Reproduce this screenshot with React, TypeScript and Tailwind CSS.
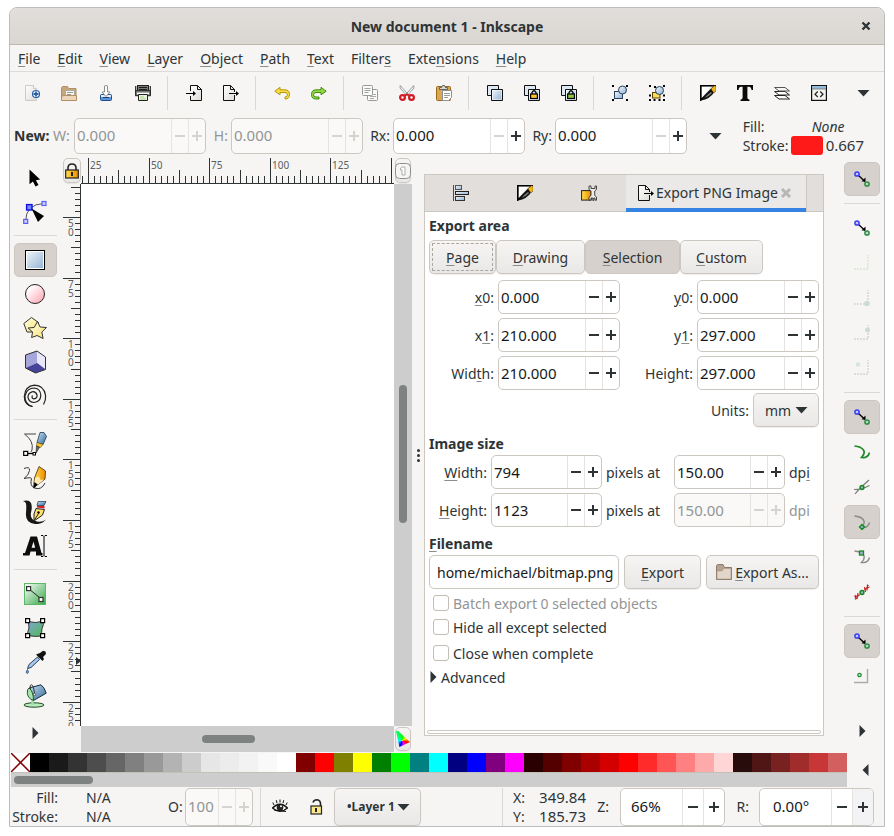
import React from 'react';

type Kids = { children?: React.ReactNode };

/* Text with a mnemonic: the letter after "_" is underlined. */
function Mn({ text }: { text: string }) {
  const i = text.indexOf('_');
  if (i < 0) return <>{text}</>;
  return (
    <>
      {text.slice(0, i)}
      <span className="underline decoration-[#8b8e8f] decoration-1 underline-offset-2">{text[i + 1]}</span>
      {text.slice(i + 2)}
    </>
  );
}

function Svg({ size = 16, children }: Kids & { size?: number }) {
  return (
    <svg width={size} height={size} viewBox={`0 0 ${size} ${size}`} className="shrink-0" aria-hidden="true">
      {children}
    </svg>
  );
}

function Gradients() {
  return (
    <svg width="0" height="0" className="absolute" aria-hidden="true">
      <defs>
        <linearGradient id="blue" x1="0" y1="0" x2="1" y2="1"><stop offset="0" stopColor="#f4f8fb" /><stop offset="1" stopColor="#8fb0d2" /></linearGradient>
        <linearGradient id="pink" x1="0" y1="0" x2="1" y2="1"><stop offset="0.2" stopColor="#fff" /><stop offset="1" stopColor="#ff9fae" /></linearGradient>
        <linearGradient id="yel" x1="0" y1="0" x2="1" y2="1"><stop offset="0" stopColor="#fffef0" /><stop offset="1" stopColor="#fbe36a" /></linearGradient>
        <linearGradient id="gold" x1="0" y1="0" x2="1" y2="0"><stop offset="0" stopColor="#ffe14d" /><stop offset="1" stopColor="#f08a00" /></linearGradient>
        <linearGradient id="green" x1="0" y1="0" x2="1" y2="1"><stop offset="0" stopColor="#fff" /><stop offset="1" stopColor="#35a845" /></linearGradient>
        <linearGradient id="mesh" x1="0" y1="0" x2="1" y2="1"><stop offset="0" stopColor="#7fa5dd" /><stop offset="1" stopColor="#4fb94f" /></linearGradient>
        <linearGradient id="steel" x1="0" y1="0" x2="1" y2="1"><stop offset="0" stopColor="#c8e2f4" /><stop offset="1" stopColor="#2f6695" /></linearGradient>
        <linearGradient id="paper" x1="0" y1="0" x2="1" y2="1"><stop offset="0" stopColor="#fff" /><stop offset="1" stopColor="#dcdcd6" /></linearGradient>
      </defs>
    </svg>
  );
}

/* ---- command bar icons ---- */
const NewDoc = () => (
  <Svg>
    <path d="M1.500.5h8l3 3v12h-11z" fill="url(#paper)" stroke="#c9cbc8" />
    <path d="M9.500.5v3h3" fill="#fff" stroke="#c9cbc8" />
    <circle cx="12" cy="9" r="3.500" fill="#fff" stroke="#2a62a8" strokeWidth="1.200" />
    <path d="M12 6.500v5M9.500 9h5" stroke="#2a62a8" strokeWidth="1.800" />
  </Svg>
);
const OpenDoc = () => (
  <Svg>
    <path d="M.5 14.500v-12l1-1h5l1 2h7.500v11z" fill="#c6a67c" stroke="#b28f63" />
    <rect x="4.500" y="5.500" width="9" height="5" fill="#f7f7f5" stroke="#a9a9a0" />
    <path d="M6 7.500h6M6 9.500h4" stroke="#9a9a92" />
    <path d="M.5 15.500V11l4-.5h11v5z" fill="#ecd5b8" stroke="#b28f63" />
  </Svg>
);
const SaveDoc = () => (
  <Svg>
    <rect x="2.500" y="9.500" width="11" height="6" rx="1" fill="#5b94d6" stroke="#234e8c" />
    <path d="M3 10h10v2H3z" fill="#e4eef9" />
    <path d="M5 12.500h6" stroke="#1d3e70" />
    <path d="M6.500 1q1.500-1 3 0v6h2.500L8 11.500 4 7h2.500z" fill="#fff" stroke="#8d8f8c" />
  </Svg>
);
const PrintDoc = () => (
  <Svg>
    <rect x="2.500" y=".5" width="11" height="6" fill="#777b78" stroke="#222" />
    <path d="M4 2.500h8M4 4.500h8" stroke="#1d1d1d" strokeWidth="1.200" />
    <path d="M.7 1v8.500h14.600V1" fill="none" stroke="#2d3234" strokeWidth="1.300" />
    <rect x=".7" y="5.700" width="14.600" height="5" fill="#8a8e8b" stroke="#222" />
    <path d="M2 8.500h12" stroke="#fff" strokeWidth="1.500" />
    <path d="M3.500 9.500h9v6h-9z" fill="#e9f3df" stroke="#222" />
    <path d="M5 12h4M5 14h6" stroke="#a8cf80" strokeWidth="1.200" />
  </Svg>
);
const ImportIcon = () => (
  <Svg>
    <path d="M4.500 6V.5h7l4 4v11h-11V11" fill="url(#paper)" stroke="#111" />
    <path d="M11.500.5v4h4" fill="none" stroke="#111" />
    <path d="M0 8.500h9" stroke="#000" /><path d="M7 6l3 2.500L7 11z" />
  </Svg>
);
const ExportIcon = () => (
  <Svg>
    <path d="M11.500 7V4.500l-4-4h-7v15h11V10" fill="url(#paper)" stroke="#111" />
    <path d="M7.500.5v4h4" fill="none" stroke="#111" />
    <path d="M6 8.500h9" stroke="#000" /><path d="M13 6l3 2.500-3 2.500z" />
  </Svg>
);
const UndoIcon = () => (
  <Svg>
    <path d="M6 2.300L.8 6.200 6 9.800V7.500h5q2.500 0 2.500 2.200T11 12v2q4.500 0 4.500-4.500T11 4.800H6z" fill="#f3dd4b" stroke="#bb9600" strokeLinejoin="round" />
  </Svg>
);
const RedoIcon = () => (
  <Svg>
    <path d="M10 2.300l5.200 3.900L10 9.800V7.500H5Q2.500 7.500 2.500 9.700T5 12h3v2H5Q.5 14 .5 9.500T5 4.800h5z" fill="#93d94e" stroke="#3f8f06" strokeLinejoin="round" />
  </Svg>
);
const CopyIcon = () => (
  <Svg>
    <rect x="5.500" y="4.500" width="10" height="11" rx="1" fill="#fafafa" stroke="#979993" />
    <path d="M11 9.500h3M8 11.500h6M8 13.500h4" stroke="#a9aba6" />
    <rect x=".5" y=".5" width="10" height="10" rx="1" fill="#fafafa" stroke="#979993" />
    <path d="M2.500 3.500h6M2.500 5.500h6M2.500 7.500h4" stroke="#a0a29d" />
  </Svg>
);
const CutIcon = () => (
  <Svg>
    <path d="M1.300.5l8 9-1.600 1L1 3zM14.700.5l-8 9 1.600 1L15 3z" fill="#f3f3f1" stroke="#85878a" strokeWidth=".8" />
    <circle cx="3.500" cy="12.500" r="2.400" fill="none" stroke="#d11a24" strokeWidth="2.200" />
    <circle cx="12.500" cy="12.500" r="2.400" fill="none" stroke="#d11a24" strokeWidth="2.200" />
    <path d="M5 10.500l3-1 3 1" stroke="#d11a24" strokeWidth="1.800" fill="none" />
  </Svg>
);
const PasteIcon = () => (
  <Svg>
    <rect x=".5" y="1.500" width="14" height="14" rx="1" fill="#dba552" stroke="#9a6a1c" />
    <path d="M3.500 4.500v-2h2l1-2h2l1 2h2v2z" fill="#d5d7d3" stroke="#60635f" />
    <path d="M6.500 5.500h9v7l-3 3h-6z" fill="#fff" stroke="#8f918d" />
    <path d="M8 8.500h6M8 10.500h6M8 12.500h4" stroke="#9a9c98" />
  </Svg>
);
const Squares = () => (
  <>
    <path d="M.5.5h11v10H.5z" fill="#dce8f4" stroke="#111" />
    <path d="M4.500 4.500h11v11h-11z" fill="url(#blue)" stroke="#111" />
    <path d="M5.500 5.500h9v9h-9z" fill="none" stroke="#fff" strokeOpacity=".5" />
  </>
);
const DuplicateIcon = () => <Svg><Squares /></Svg>;
const CloneIcon = ({ fill }: { fill: string }) => (
  <Svg>
    <Squares />
    <path d="M8 9V7.500Q10 4 12 7.500V9" fill="none" stroke="#000" strokeWidth="1.300" />
    <rect x="6.600" y="9" width="6.800" height="4.500" fill={fill} stroke="#000" strokeWidth="1.200" />
  </Svg>
);
const Corners = () => <path d="M0 0h2v2H0zM14 0h2v2h-2zM0 14h2v2H0zM4.500 14h2v2h-2zM14 14h2v2h-2zM14 9.500h2v2h-2zM9.500 14h2v2h-2zM0 9.500h2v2H0zM5 1h2v2H5z" />;
const GroupIcon = () => (
  <Svg>
    <path d="M0 0h2v2H0zM14 0h2v2h-2zM0 14h2v2H0zM14 14h2v2h-2z" />
    <rect x="2.500" y="6.500" width="8" height="7" fill="url(#blue)" stroke="#27405c" />
    <circle cx="10.500" cy="5" r="4" fill="url(#blue)" stroke="#27405c" />
  </Svg>
);
const UngroupIcon = () => (
  <Svg>
    <Corners />
    <rect x="3.500" y="7.500" width="7.500" height="5.500" fill="#ffd95a" stroke="#5a4300" />
    <circle cx="10.500" cy="5.500" r="4" fill="url(#blue)" stroke="#27405c" />
  </Svg>
);
const FillStrokeIcon = () => (
  <Svg>
    <path d="M.8.8h14.400L13 3 .8 15z" fill="#d9d9d6" stroke="#000" strokeWidth="1.600" />
    <path d="M2 2h9L2 12z" fill="#fff" />
    <path d="M1 15.500Q5 10 11 4l3 3.500Q10 14 1 15.500z" fill="#111" />
    <path d="M4.500 13q3.500-4 6.500-6l1 1q-3 3.500-7.500 5z" fill="#7c7c7a" />
    <path d="M11 3.800L14.500.8l1.500.5V6l-2 1.800z" fill="#f4b71b" stroke="#6d4c00" strokeWidth=".6" />
  </Svg>
);
const TextDialogIcon = () => (
  <Svg>
    <path d="M0 0h16v5h-1.500Q14 1.800 12 1.800h-1.600v11q0 1.700 2.100 1.900v1.300H3.500v-1.300q2.100-.2 2.100-1.900v-11H4Q2 1.800 1.500 5H0z" fill="#0a0a0a" />
  </Svg>
);
const LayersIcon = () => (
  <Svg>
    <path d="M.5 10.500h10.500l4.500 3.500H5z" fill="#fff" stroke="#222" strokeLinejoin="round" />
    <path d="M.5 6.500h10.500l4.500 3.500H5z" fill="#fff" stroke="#222" strokeLinejoin="round" />
    <path d="M.5 2.500h10.500l4.500 3.500H5z" fill="#f5f5f3" stroke="#555" strokeLinejoin="round" />
  </Svg>
);
const XmlIcon = () => (
  <Svg>
    <rect x=".6" y=".6" width="14.800" height="14.800" fill="#f2f2ee" stroke="#111" strokeWidth="1.200" />
    <path d="M1.200 1.200h13.600v2.600H1.200z" fill="#8cb9dd" />
    <path d="M1 4h14" stroke="#444" strokeWidth=".6" />
    <path d="M6.800 6.500L4 9.200 6.800 12M9.200 6.500L12 9.200 9.200 12" fill="none" stroke="#222" strokeWidth="1.200" />
  </Svg>
);
const AlignIcon = () => (
  <Svg>
    <path d="M.5 0v16" stroke="#c8141e" />
    <rect x="2.500" y=".5" width="6" height="4" fill="url(#blue)" stroke="#555" />
    <rect x="2.500" y="6.500" width="13" height="3" fill="url(#blue)" stroke="#222" />
    <rect x="2.500" y="11.500" width="9" height="4" fill="url(#blue)" stroke="#333" />
  </Svg>
);
const ObjPropIcon = () => (
  <Svg>
    <rect x=".6" y="5.600" width="9.500" height="9.500" fill="url(#gold)" stroke="#222" strokeWidth="1" />
    <path d="M8 1v3.500L10 6v4.500L8 12v3h2v-2h1.800v2.500h1V13h1.200v2.200h1.500V12L13.700 10.500V6L15.500 4.500V1H14v2.500h-4V1z" fill="#ecece8" stroke="#333" strokeWidth=".9" />
  </Svg>
);
const FolderIcon = () => (
  <Svg>
    <path d="M.5 15.500V1.500l1-1h5.500l1.500 3h7v12z" fill="#b5a291" stroke="#8d7a68" />
    <path d="M1 15V7h5l2-2.500h7V15z" fill="#e2d6ca" stroke="#a8967f" strokeWidth=".6" />
  </Svg>
);

/* ---- toolbox icons ---- */
const SelectTool = () => <Svg size={24}><path d="M6.500 3.500v14.800l3.400-2.800 2.600 5 3-1.500-2.600-4.800 4.200-.7z" fill="#000" /></Svg>;
const NodeTool = () => (
  <Svg size={24}>
    <path d="M2.500 22Q2.500 4 21 3.500" fill="none" stroke="#555" />
    <rect x="3.600" y="4.600" width="5.400" height="5.400" fill="#7d86ff" stroke="#0c12e0" strokeWidth="1.400" />
    <rect x="19" y="1.500" width="4" height="4" fill="#ccccff" stroke="#5a5ff5" strokeWidth="1.200" />
    <rect x=".7" y="19.400" width="4" height="4" fill="#ccccff" stroke="#5a5ff5" strokeWidth="1.200" />
    <path d="M8.500 8.500L21 16l-6 6z" fill="#000" />
  </Svg>
);
const RectTool = () => (
  <Svg size={24}>
    <rect x="2.500" y="2.500" width="19" height="19" fill="url(#blue)" stroke="#000" />
    <rect x="3.500" y="3.500" width="17" height="17" fill="none" stroke="#fff" />
  </Svg>
);
const EllipseTool = () => <Svg size={24}><circle cx="12" cy="12" r="9.500" fill="url(#pink)" stroke="#222" /></Svg>;
const StarTool = () => (
  <Svg size={24}>
    <path d="M8.500 1.500l7 5-2.500 9.500H4L.8 7.500z" fill="url(#yel)" stroke="#333" />
    <path d="M14.500 5.500l2.600 5.500 6.400.5-4.700 4.500 1.300 6.500-6-3-5.500 2 1-5.500-4.500-4 6-.5z" fill="url(#yel)" stroke="#333" />
  </Svg>
);
const BoxTool = () => (
  <Svg size={24}>
    <path d="M2.500 5l11.500-4 8.500 6v12.500L12.500 23l-10-5z" fill="#8583c2" />
    <path d="M14 1l8.500 6v12.500L14 13z" fill="#e9e8fb" />
    <path d="M14 13l8.500 6.500L12.500 23l-10-5z" fill="#45439a" />
    <path d="M2.500 5L14 1v12L2.500 18z" fill="#a7a6da" />
    <path d="M2.500 5l11.500-4 8.500 6v12.500L12.500 23l-10-5z" fill="none" stroke="#333" />
  </Svg>
);
const SpiralTool = () => (
  <Svg size={24}>
    <path d="M9.500 11.500Q8 14.500 11 14.800 14.500 14.500 14 11 12.800 7.200 9 7.800 4.800 9 5 13.500 6.200 18.500 11 18.500 17.500 17.800 17.800 11.500 17.500 4.800 11.500 4 4 4 2 11.500 1.200 20.500 9.500 22.500" fill="none" stroke="#222" strokeWidth="1.200" />
    <path d="M9.500 22.500Q1.500 21 1.300 12.500 2 2 11.500 1.200 21 1.500 22.600 11.500q.4 5-2.100 9" fill="none" stroke="#222" strokeWidth="1.200" />
  </Svg>
);
const PenTool = () => (
  <Svg size={24}>
    <path d="M13 2H1.500Q11 9 9 18l-1 2" fill="none" stroke="#444" />
    <path d="M5 21.500h7" stroke="#000" strokeWidth="1.300" />
    <rect x=".7" y="19.400" width="4" height="4" fill="#fff" stroke="#000" strokeWidth="1.200" />
    <rect x="10" y="20.500" width="2.500" height="2.500" fill="#fff" stroke="#000" />
    <path d="M17 .5h4l2.500 4-3.500 8-6-2z" fill="url(#steel)" stroke="#1b3b58" strokeWidth=".8" />
    <path d="M14 10.500l6 2-2.500 3-4-1.500z" fill="#fbc630" stroke="#6b4d00" strokeWidth=".6" />
    <path d="M13.500 14l3 1.200-3.500 6z" fill="#666" stroke="#222" strokeWidth=".6" />
  </Svg>
);
const PencilTool = () => (
  <Svg size={24}>
    <path d="M1 2.500Q7 0 6.500 4.500 6 9 1 12.500q7-1.500 7.500 0-2 7.500 3 9.500 7 2.500 10.500-5" fill="none" stroke="#333" />
    <path d="M16 .5L22.500 5 22 13l-5 4-6.500 4.500L11.500 12z" fill="url(#gold)" stroke="#3d2b00" strokeWidth=".8" />
    <path d="M12 12l4-1.500 1.500 3.500 3.500-.5-4 3.500-6 4.500z" fill="#ffe9b8" />
    <path d="M11.300 16l3.500 2.500-4 4z" fill="#000" />
  </Svg>
);
const CalligraphyTool = () => (
  <Svg size={24}>
    <path d="M0 1q6-1.500 8 2 1.500 4 0 9.500-1.500 7 6 9 5 1 9-2-4 5-11 4.500Q2 23 3 13q.5-7 0-9.500Q2.500 1.500 0 1z" fill="#161616" />
    <path d="M15 1.500h8l-2 4h-7z" fill="url(#steel)" stroke="#16324c" strokeWidth=".7" />
    <path d="M14 6h7.500v2.500L14 7.500z" fill="#d81e2a" />
    <path d="M13 8.500l8.500 1-2 5.500-8.500 6V14z" fill="#ffe071" stroke="#222" />
    <path d="M11.500 20l4-6.500" stroke="#222" /><circle cx="15.500" cy="12.500" r="1.200" />
  </Svg>
);
const TextTool = () => (
  <Svg size={24}>
    <path d="M0 21.500v-2.500h2L7.500 2.500h6.500L18.500 19h1v2.500h-6.500v-4H7.500l-1 4z" fill="#0c0c0c" />
    <path d="M10.500 7.500l1.700 6.300H8.600z" fill="#f6f5f4" />
    <path d="M18 1.500h2l1 1 1-1h2M18 22.500h2l1-1 1 1h2M21 2.500v19" fill="none" stroke="#000" />
  </Svg>
);
const GradientTool = () => (
  <Svg size={24}>
    <rect x="1.500" y="1.500" width="21" height="21" fill="url(#green)" stroke="#5cb866" />
    <path d="M6 7l13 10.500" stroke="#222" />
    <rect x="3.600" y="4.600" width="4" height="4" fill="#fff" stroke="#333" strokeWidth="1.200" />
    <rect x="16" y="15.500" width="4" height="4" fill="#fff" stroke="#333" strokeWidth="1.200" />
  </Svg>
);
const MeshTool = () => (
  <Svg size={24}>
    <path d="M4.500 4.500q8 4 15 0 2 4-.5 8-1 4 .5 7.500-8 1-15-.5 0-4 1.500-7.500Q6 8 4.500 4.500z" fill="url(#mesh)" stroke="#333" />
    <path d="M2.600 2.600h4v4h-4zM17.600 2.600h4v4h-4zM2.600 17.600h4v4h-4zM17.600 17.600h4v4h-4z" fill="#fff" stroke="#000" strokeWidth="1.200" />
  </Svg>
);
const DropperTool = () => (
  <Svg size={24}>
    <path d="M14.500 7L6 14.500l-1.500 4L8 17.500 16.500 9.500z" fill="#a9c9ea" stroke="#243e5b" />
    <path d="M13 4.500l6.500 6.500 1.500-2-1-2 3-3-.5-2.500L20 .8 17 3z" fill="#111" />
    <path d="M4.500 19.500q2 3 0 4-2.500-.5 0-4z" fill="#76a7dd" stroke="#2a4d78" strokeWidth=".8" />
  </Svg>
);
const BucketTool = () => (
  <Svg size={24}>
    <ellipse cx="11" cy="21" rx="10" ry="2.200" fill="#b9ecbd" stroke="#1e4d24" />
    <path d="M9.500 15v6" stroke="#9fe0a6" strokeWidth="2.400" />
    <path d="M6 4L18 .8q3.500 2.500 5.200 8.400L10.500 16.500z" fill="url(#steel)" stroke="#1a2c3b" strokeLinejoin="round" />
    <path d="M6 4q4.500 3.500 4.500 12.500Q5 14.500 4.300 9.500 4 5 6 4z" fill="#a8e3ae" stroke="#1f5c2a" />
    <path d="M7.500 5Q6.500.8 8.500.8t3 9" fill="none" stroke="#333" />
    <circle cx="11.500" cy="10.500" r="1.200" fill="#fff" stroke="#333" strokeWidth=".8" />
  </Svg>
);

/* ---- snap bar icons ---- */
const Snap = () => (
  <Svg>
    <path d="M4 4l7 6.500" stroke="#000" strokeWidth="1.300" /><path d="M7.500 10.500h4v-4z" />
    <circle cx="3" cy="3" r="2.100" fill="#c5c8ff" stroke="#3a3df0" strokeWidth="1.500" />
    <circle cx="13" cy="13" r="2.100" fill="#b5dcc4" stroke="#2f8a42" strokeWidth="1.500" />
  </Svg>
);
const Edge = ({ kind }: { kind: number }) => (
  <Svg>
    <path d="M0 14h14V0" fill="none" stroke={kind ? '#d3d5d4' : '#d4e8d4'} strokeWidth="1.400" strokeDasharray="2 1" />
    {kind === 1 && <circle cx="13" cy="13.500" r="2.800" fill="#c9ddd3" />}
    {kind === 2 && <circle cx="13.500" cy="5" r="2.500" fill="#c9ddd3" />}
    {kind === 3 && <circle cx="4" cy="4.500" r="1.600" fill="#e2eee8" stroke="#c9ddd3" />}
  </Svg>
);
const curve = 'M.5 2Q7 2.500 9.500 6 11.500 9.500 7.500 13.500 14 14.500 15.500 8.500';
const PathSnap = () => <Svg><path d={curve} fill="none" stroke="#1f8a28" strokeWidth="1.700" /></Svg>;
const CrossSnap = () => (
  <Svg>
    <path d="M1 15Q5 10 15 1M0 10.500q8 0 15.500-4" fill="none" stroke="#7c7c7c" strokeWidth="1.200" />
    <circle cx="8" cy="8.500" r="1.900" fill="#9cb0d0" stroke="#168a20" strokeWidth="1.500" />
  </Svg>
);
const CuspSnap = () => (
  <Svg>
    <path d={curve} fill="none" stroke="#8a8a8a" strokeWidth="1.400" />
    <path d="M8 10.500l2.500 2.500L8 15.500 5.500 13z" fill="#9cb0d0" stroke="#168a20" strokeWidth="1.400" />
  </Svg>
);
const SmoothSnap = () => (
  <Svg>
    <path d={curve} fill="none" stroke="#8a8a8a" strokeWidth="1.400" />
    <rect x="5.500" y="2" width="4" height="4" fill="#9cb0d0" stroke="#168a20" strokeWidth="1.300" />
  </Svg>
);
const MidSnap = () => (
  <Svg>
    <path d="M1 15.500L15 1" stroke="#7c7c7c" />
    <path d="M1 11l1 4.500M4 9l-1 6M.5 13l5-2M10.500 3l1 5M13.500.5l-.5 6M10.500 5.500l5-2.500" stroke="#cc2020" strokeWidth="1.200" />
    <circle cx="8" cy="8.500" r="1.900" fill="#9cb0d0" stroke="#168a20" strokeWidth="1.500" />
  </Svg>
);
const ObjSnap = () => (
  <Svg>
    <path d="M0 14.500h13.500V1" fill="none" stroke="#aaa" strokeWidth="1.400" />
    <circle cx="5.500" cy="7" r="1.700" fill="#cfe4d6" stroke="#239038" strokeWidth="1.300" />
  </Svg>
);

/* ---- small glyphs ---- */
const Down = () => <svg width="13" height="8" viewBox="0 0 13 8" className="shrink-0" aria-hidden="true"><path d="M.5 1h12l-6 6.500z" fill="#2e3436" /></svg>;
const RightTri = () => <svg width="7" height="12" viewBox="0 0 7 12" className="shrink-0" aria-hidden="true"><path d="M.5 0v12L6.500 6z" fill="#2e3436" /></svg>;
const LeftTri = () => <svg width="7" height="12" viewBox="0 0 7 12" className="shrink-0" aria-hidden="true"><path d="M6.500 0v12L.5 6z" fill="#2e3436" /></svg>;

function Sign({ plus, dim }: { plus?: boolean; dim?: boolean }) {
  return (
    <svg width="10" height="10" viewBox="0 0 10 10" aria-hidden="true">
      <path d={plus ? 'M0 5h10M5 0v10' : 'M0 5h10'} stroke={dim ? '#d5d4d2' : '#2e3436'} strokeWidth="2" />
    </svg>
  );
}

type SpinProps = {
  label: string; value: string; width: string; tall?: string; cell?: string; input?: string;
  disabled?: boolean; minusDim?: boolean; plusBg?: string;
};
function Spin({ label, value, width, tall = 'h-[34px]', cell = 'w-[17px]', input = 'px-0.5', disabled, minusDim, plusBg = '' }: SpinProps) {
  const face = disabled ? 'bg-[#faf9f8] text-[#929595]' : 'bg-white text-[#16191a]';
  return (
    <div className={`flex shrink-0 overflow-hidden rounded-[5px] border border-[#cdc7c2] ${width} ${tall} ${face}`}>
      <input aria-label={label} defaultValue={value} disabled={disabled} className={`w-0 min-w-0 flex-1 bg-transparent text-[15px] outline-none ${input}`} />
      <button aria-label={`Decrease ${label}`} disabled={disabled} className={`flex shrink-0 items-center justify-center border-l border-[#e6e4e1] ${cell}`}><Sign dim={disabled || minusDim} /></button>
      <button aria-label={`Increase ${label}`} disabled={disabled} className={`flex shrink-0 items-center justify-center border-l border-[#e6e4e1] ${cell} ${plusBg}`}><Sign plus dim={disabled} /></button>
    </div>
  );
}

const raised = 'rounded-[5px] border border-[#cdc7c2] bg-linear-to-b from-[#f6f5f3] to-[#eae8e6] shadow-[0_1px_1px_rgba(0,0,0,0.07)]';
const pressed = 'rounded-[5px] border border-[#cdc7c2] bg-[#d6d1cd]';

const menus = ['_File', '_Edit', '_View', '_Layer', '_Object', '_Path', '_Text', 'Filter_s', 'Exte_nsions', '_Help'];

const commands: [string, React.ReactNode][][] = [
  [['New', <NewDoc />], ['Open', <OpenDoc />], ['Save', <SaveDoc />], ['Print', <PrintDoc />]],
  [['Import', <ImportIcon />], ['Export', <ExportIcon />]],
  [['Undo', <UndoIcon />], ['Redo', <RedoIcon />]],
  [['Copy', <CopyIcon />], ['Cut', <CutIcon />], ['Paste', <PasteIcon />]],
  [['Duplicate', <DuplicateIcon />], ['Clone', <CloneIcon fill="#ffc02e" />], ['Unlink clone', <CloneIcon fill="#8cc63f" />]],
  [['Group', <GroupIcon />], ['Ungroup', <UngroupIcon />]],
  [['Fill and Stroke', <FillStrokeIcon />], ['Text and Font', <TextDialogIcon />], ['Layers', <LayersIcon />], ['XML Editor', <XmlIcon />]],
];

const tools: [string, React.ReactNode][][] = [
  [['Selector', <SelectTool />], ['Node', <NodeTool />]],
  [['Rectangle', <RectTool />], ['Ellipse', <EllipseTool />], ['Star', <StarTool />], ['3D Box', <BoxTool />], ['Spiral', <SpiralTool />]],
  [['Pen', <PenTool />], ['Pencil', <PencilTool />], ['Calligraphy', <CalligraphyTool />], ['Text', <TextTool />]],
  [['Gradient', <GradientTool />], ['Mesh', <MeshTool />], ['Dropper', <DropperTool />], ['Paint Bucket', <BucketTool />]],
];

const snaps: [string, React.ReactNode, boolean][][] = [
  [['Enable snapping', <Snap />, true]],
  [['Snap bounding boxes', <Snap />, false], ['Snap box edges', <Edge kind={0} />, false], ['Snap box corners', <Edge kind={1} />, false], ['Snap edge midpoints', <Edge kind={2} />, false], ['Snap box centers', <Edge kind={3} />, false]],
  [['Snap nodes', <Snap />, true], ['Snap to paths', <PathSnap />, false], ['Snap intersections', <CrossSnap />, false], ['Snap cusp nodes', <CuspSnap />, true], ['Snap smooth nodes', <SmoothSnap />, false], ['Snap midpoints', <MidSnap />, false]],
  [['Snap others', <Snap />, true], ['Snap object centers', <ObjSnap />, false]],
];

const swatches = [
  'bg-[#000000]', 'bg-[#1a1a1a]', 'bg-[#333333]', 'bg-[#4d4d4d]', 'bg-[#666666]', 'bg-[#808080]', 'bg-[#999999]', 'bg-[#b3b3b3]',
  'bg-[#cccccc]', 'bg-[#e6e6e6]', 'bg-[#ececec]', 'bg-[#f2f2f2]', 'bg-[#f9f9f9]', 'bg-[#ffffff]', 'bg-[#800000]', 'bg-[#ff0000]',
  'bg-[#808000]', 'bg-[#ffff00]', 'bg-[#008000]', 'bg-[#00ff00]', 'bg-[#008080]', 'bg-[#00ffff]', 'bg-[#000080]', 'bg-[#0000ff]',
  'bg-[#800080]', 'bg-[#ff00ff]', 'bg-[#2b0000]', 'bg-[#550000]', 'bg-[#800000]', 'bg-[#aa0000]', 'bg-[#d40000]', 'bg-[#ff0000]',
  'bg-[#ff2a2a]', 'bg-[#ff5555]', 'bg-[#ff8080]', 'bg-[#ffaaaa]', 'bg-[#ffd5d5]', 'bg-[#280b0b]', 'bg-[#501616]', 'bg-[#782121]',
  'bg-[#a02c2c]', 'bg-[#c83737]', 'bg-[#d35f5f]',
];

/* Pixels between two neighbouring ruler ticks. */
const PITCH = 6.06;

/* The rulers draw only the ticks and numbers that their current length has room for. */
function useSize() {
  const ref = React.useRef<SVGSVGElement>(null);
  const [size, setSize] = React.useState({ w: 0, h: 0 });
  React.useLayoutEffect(() => {
    const el = ref.current;
    if (!el) return;
    const measure = () => {
      const r = el.getBoundingClientRect();
      setSize({ w: r.width, h: r.height });
    };
    measure();
    const watcher = new ResizeObserver(measure);
    watcher.observe(el);
    return () => watcher.disconnect();
  }, []);
  return { ref, ...size };
}

function ticks(start: number, length: number) {
  const first = Math.ceil(-start / PITCH);
  const last = Math.floor((length - start) / PITCH);
  return Array.from({ length: Math.max(0, last - first + 1) }, (_, i) => first + i);
}

function TopRuler() {
  const { ref, w } = useSize();
  const all = ticks(7, w);
  return (
    <svg ref={ref} width="100%" height="26" className="min-w-0" aria-label="Horizontal ruler">
      {all.map((n) => {
        const x = Math.round(7 + n * PITCH) + 0.5;
        const y = n % 10 === 0 ? 0 : n % 5 === 0 ? 12 : 18;
        return <path key={n} d={`M${x} ${y}V26`} stroke="#2e3436" />;
      })}
      {all.filter((n) => n >= 0 && n % 10 === 0 && n * PITCH + 30 < w).map((n) => (
        <text key={n} x={Math.round(9 + n * PITCH)} y="11" fontSize="10" fill="#5a5f61">{25 + n * 2.5}</text>
      ))}
      <path d="M0 25.500h4000" stroke="#2e3436" />
    </svg>
  );
}

function SideRuler() {
  const { ref, h } = useSize();
  const all = ticks(33, h);
  return (
    <svg ref={ref} width="18" height="100%" aria-label="Vertical ruler">
      {all.map((n) => {
        const y = Math.round(33 + n * PITCH) + 0.5;
        const x = n % 10 === 0 ? 0 : n % 5 === 0 ? 8 : 12;
        return <path key={n} d={`M${x} ${y}H18`} stroke="#2e3436" />;
      })}
      {all.filter((n) => n >= 0 && n % 10 === 0).map((n) =>
        String(50 + n * 2.5).split('').map((c, i) => (
          <text key={`${n}-${i}`} x="5" y={Math.round(43 + n * PITCH) + i * 9} fontSize="10" fill="#5a5f61">{c}</text>
        )),
      )}
      <path d="M17.500 0v4000" stroke="#2e3436" />
      <path d="M13 473l5 4-5 4z" fill="#2e3436" />
    </svg>
  );
}

function Lock({ open }: { open?: boolean }) {
  return (
    <Svg>
      <path d={open ? 'M5 3.500Q6 .8 9 .8q3.500.5 3.500 4V7' : 'M4 7V5Q4 1 8 1t4 4v2'} fill="none" stroke="#222" strokeWidth="1.600" />
      <rect x={open ? 3 : 1.7} y="7" width={open ? 10.5 : 12.6} height="8" fill={open ? '#fbe88a' : 'url(#gold)'} stroke="#222" strokeWidth="1.200" />
      <path d="M8 9v4" stroke="#222" strokeWidth="2" />
    </Svg>
  );
}

function Field({ mn, label, value }: { mn: string; label: string; value: string }) {
  return (
    <div className="flex items-center gap-1">
      <span><Mn text={mn} /></span>
      <Spin label={label} value={value} width="w-[122px]" />
    </div>
  );
}

function SizeRow({ mn, label, value, dim }: { mn: string; label: string; value: string; dim?: boolean }) {
  return (
    <div className="flex items-center gap-1">
      <span className="w-[58px] text-right"><Mn text={mn} /></span>
      <Spin label={`Image ${label}`} value={value} width="w-[111px]" />
      <span className="w-16">pixels at</span>
      <Spin label={`${label} resolution`} value="150.00" width="w-[111px]" disabled={dim} />
      <span className={dim ? 'text-[#929595]' : ''}><Mn text={dim ? 'dpi' : 'dp_i'} /></span>
    </div>
  );
}

function Check({ text, dim }: { text: string; dim?: boolean }) {
  return (
    <label className={`flex h-6 items-center gap-1 pl-1 ${dim ? 'text-[#929595]' : ''}`}>
      <input type="checkbox" disabled={dim} className="size-4 shrink-0 appearance-none rounded-[3px] border border-[#c4bdb7] bg-white" />
      {text}
    </label>
  );
}

function ExportPanel() {
  return (
    <section className="mt-4 mb-4 flex w-[400px] shrink-0 flex-col border border-[#cdc7c2] bg-white">
      <div className="flex h-[37px] shrink-0 border-b border-[#cdc7c2] bg-[#e1dedb] pl-1">
        {[<AlignIcon />, <FillStrokeIcon />, <ObjPropIcon />].map((icon, i) => (
          <button key={i} aria-label={['Align', 'Fill and Stroke', 'Object Properties'][i]} className="flex w-16 items-center justify-center">{icon}</button>
        ))}
        <div className="-mb-px ml-[5px] flex w-[180px] items-center gap-0.5 border-b-4 border-[#3584e4] bg-[#ebe9e7] pt-0.5 pl-3">
          <ExportIcon />
          <span className="whitespace-nowrap">Export PNG Image</span>
          <button aria-label="Close tab" className="ml-auto pr-[14px]">
            <svg width="12" height="12" viewBox="0 0 12 12" aria-hidden="true"><path d="M2 2l8 8M10 2l-8 8" stroke="#b8b6b3" strokeWidth="3" /></svg>
          </button>
        </div>
        <div className="w-px bg-[#cdc7c2]" />
      </div>

      <div className="flex flex-1 flex-col px-1 pt-0.5">
        <h2 className="mb-[3px] flex h-[23px] items-center font-bold">Export area</h2>
        <div className="flex h-[34px]">
          <button className={`w-[67px] p-0.5 ${raised}`}><span className="flex h-full items-center justify-center border border-dashed border-[#a9a6a3]"><span><Mn text="_Page" /></span></span></button>
          <button className={`w-[89px] ${raised}`}><Mn text="_Drawing" /></button>
          <button aria-pressed="true" className={`w-[95px] ${pressed}`}><Mn text="_Selection" /></button>
          <button className={`w-[83px] ${raised}`}><Mn text="_Custom" /></button>
        </div>
        <div className="mt-1.5 grid grid-cols-[191px_1fr] justify-items-end gap-y-1">
          <Field mn="_x0:" label="x0" value="0.000" /><Field mn="_y0:" label="y0" value="0.000" />
          <Field mn="x_1:" label="x1" value="210.000" /><Field mn="y_1:" label="y1" value="297.000" />
          <Field mn="Wid_th:" label="Area width" value="210.000" /><Field mn="Hei_ght:" label="Area height" value="297.000" />
        </div>
        <div className="mt-[3px] flex items-center justify-end gap-1">
          <label htmlFor="units">Units:</label>
          <div className="grid items-center">
            <select id="units" className={`col-start-1 row-start-1 h-[34px] w-[66px] appearance-none pl-[11px] ${raised}`}><option>mm</option></select>
            <span className="pointer-events-none col-start-1 row-start-1 mr-[11px] justify-self-end"><Down /></span>
          </div>
        </div>

        <h2 className="mt-1 flex h-6 items-center font-bold">Image size</h2>
        <div className="flex flex-col gap-1">
          <SizeRow mn="_Width:" label="width" value="794" />
          <SizeRow mn="_Height:" label="height" value="1123" dim />
        </div>

        <label htmlFor="file" className="mt-1 flex h-6 items-center font-bold"><span><Mn text="_Filename" /></span></label>
        <div className="flex h-[34px] gap-[5px]">
          <input id="file" defaultValue="home/michael/bitmap.png" className="min-w-0 flex-1 rounded-[5px] border border-[#cdc7c2] bg-white pl-[7px] text-[#16191a] outline-none" />
          <button className={`w-[77px] ${raised}`}><Mn text="_Export" /></button>
          <button className={`flex w-[113px] items-center justify-center gap-[3px] ${raised}`}><FolderIcon /><span><Mn text="_Export As..." /></span></button>
        </div>
        <div className="mt-0.5 flex flex-col">
          <Check text="Batch export 0 selected objects" dim />
          <Check text="Hide all except selected" />
          <div className="h-0.5" />
          <Check text="Close when complete" />
          <button className="flex h-6 items-center gap-1 pl-px"><RightTri />Advanced</button>
        </div>
        <div className="-mx-0.5 mt-auto mb-px h-1 rounded-[2px] border border-[#cdc7c2]" />
      </div>
    </section>
  );
}

function CanvasArea() {
  return (
    <div className="grid min-h-0 min-w-0 flex-1 grid-cols-[18px_minmax(0,1fr)_18px] grid-rows-[26px_minmax(0,1fr)_26px]">
      <button aria-label="Lock guides" className={`mb-px flex items-center justify-center ${raised}`}><Lock /></button>
      <TopRuler />
      <button aria-label="Zoom drawing" className={`mx-px mb-px flex items-center justify-center ${raised}`}>
        <Svg>
          <rect x=".5" y=".5" width="15" height="15" rx="4" fill="#f6f5f4" stroke="#8c8f90" />
          <path d="M5.500 5l1.500-1h3v8H7V7H5.500z" fill="#fff" stroke="#9a9c9c" strokeWidth=".8" />
        </Svg>
      </button>
      <SideRuler />
      <div className="bg-white" />
      <div className="flex justify-center bg-[#cdcdcd] pt-[201px]"><div className="h-[138px] w-2 rounded-full bg-[#7e8281]" /></div>
      <div />
      <div className="flex items-center bg-[#cdcdcd] pl-[121px]"><div className="h-2 w-[53px] rounded-full bg-[#7e8281]" /></div>
      <button aria-label="Color management" className={`mx-px my-px flex items-center justify-center ${raised}`}>
        <div className="h-4 w-[14px] bg-[conic-gradient(from_0deg_at_45%_60%,#0f0,#ff0_60deg,#f00_110deg,#f0f_160deg,#00f_200deg,#0ff_270deg,#0f0)] [clip-path:polygon(0%_0%,15%_0%,100%_68%,24%_100%)]" />
      </button>
    </div>
  );
}

export default function App() {
  return (
    <div className="flex min-h-screen flex-col bg-white px-[9px] pt-[7px] pb-[9px] font-['Noto_Sans','DejaVu_Sans',sans-serif] text-[14px] leading-[19px] text-[#2e3436]">
      <Gradients />
      <div className="flex flex-1 flex-col overflow-hidden rounded-t-lg border border-[#bbbcbc] bg-[#f6f5f4]">
        <header className="grid h-[37px] grid-cols-[1fr_auto_1fr] items-center border-b border-[#bfb8b1] bg-linear-to-b from-[#e1dedb] to-[#dad6d2]">
          <span />
          <h1 className="font-bold">New document 1 - Inkscape</h1>
          <button aria-label="Close window" className="mr-3 justify-self-end">
            <svg width="12" height="12" viewBox="0 0 12 12" aria-hidden="true"><path d="M2.500 2.500l7 7M9.500 2.500l-7 7" stroke="#2e3436" strokeWidth="2.400" /></svg>
          </button>
        </header>

        <nav className="flex h-[27px] items-center gap-px border-b border-[#dddbd9]">
          {menus.map((m) => <button key={m} className="px-2"><Mn text={m} /></button>)}
        </nav>

        <div className="flex h-[41px] items-center pl-[3px]">
          {commands.map((group, g) => (
            <React.Fragment key={g}>
              {g > 0 && <div className="mx-[6px] h-[34px] w-0.5 border-l border-[#dad8d5]" />}
              {group.map(([name, icon]) => (
                <button key={name} aria-label={name} title={name} className="flex h-[34px] w-[37px] shrink-0 items-center justify-center">{icon}</button>
              ))}
            </React.Fragment>
          ))}
          <button aria-label="More commands" className="mr-[14px] ml-auto"><Down /></button>
        </div>

        <div className="flex h-[43px] items-center pt-0.5 pl-1">
          <span className="w-[39px] font-bold">New:</span>
          <span className="w-[21px] text-[#929595]">W:</span>
          <Spin label="Rectangle width" value="0.000" width="w-[132px]" tall="h-9" disabled />
          <span className="w-[25px] pr-[3px] text-right text-[#929595]">H:</span>
          <Spin label="Rectangle height" value="0.000" width="w-[132px]" tall="h-9" disabled />
          <span className="w-[30px] pr-[3px] text-right">Rx:</span>
          <Spin label="Rx" value="0.000" width="w-[132px]" tall="h-9" minusDim />
          <span className="w-[30px] pr-[3px] text-right">Ry:</span>
          <Spin label="Ry" value="0.000" width="w-[132px]" tall="h-9" minusDim />
          <button aria-label="More options" className="ml-auto"><Down /></button>
          <div className="mr-5 ml-[21px] grid grid-cols-[48px_32px_auto]">
            <span>Fill:</span><span className="col-span-2 pl-[21px] italic">None</span>
            <span>Stroke:</span><span className="rounded-[3px] bg-[#ff1a1a]" /><span className="pl-[3px] text-[15px]">0.667</span>
          </div>
        </div>

        <div className="mt-0.5 flex min-h-[594px] flex-1">
          <div className="flex w-[53px] shrink-0 flex-col pt-[3px] pr-1.5 pl-1">
            {tools.map((group, g) => (
              <React.Fragment key={g}>
                {g > 0 && <div className="my-[6px] h-0.5 shrink-0 border-t border-[#dad8d5]" />}
                {group.map(([name, icon]) => (
                  <button key={name} aria-label={name} title={name} className={`flex h-[34px] shrink-0 items-center justify-center pr-px ${name === 'Rectangle' ? pressed : ''}`}>{icon}</button>
                ))}
              </React.Fragment>
            ))}
            <button aria-label="More tools" className="flex flex-1 items-center justify-center"><RightTri /></button>
          </div>

          <CanvasArea />

          <div className="flex w-3 shrink-0 flex-col items-center justify-center gap-0.5">
            {[0, 1, 2].map((i) => <span key={i} className="size-[3px] rounded-full bg-[#2e3436]" />)}
          </div>

          <ExportPanel />

          <div className="flex w-[60px] shrink-0 flex-col pt-1 pr-1 pl-5">
            {snaps.map((group, g) => (
              <React.Fragment key={g}>
                {g > 0 && <div className="my-[6px] h-0.5 shrink-0 border-t border-[#dad8d5]" />}
                {group.map(([name, icon, on]) => (
                  <button key={name} aria-label={name} title={name} className={`mb-px flex h-[34px] shrink-0 items-center justify-center ${on ? pressed : ''}`}>{icon}</button>
                ))}
              </React.Fragment>
            ))}
            <button aria-label="More snapping" className="flex flex-1 items-center justify-center pt-4"><RightTri /></button>
          </div>
        </div>

        <div className="mt-px flex">
          <div className="ml-px min-w-0 flex-1">
            <div className="flex h-[19px]">
              <button aria-label="No color" className="flex-1 bg-white">
                <svg width="100%" height="19" viewBox="0 0 19 19" aria-hidden="true"><path d="M0 0l19 19M19 0L0 19" stroke="#800000" strokeWidth="1.500" /></svg>
              </button>
              {swatches.map((c, i) => <button key={i} aria-label={`Swatch ${i + 1}`} className={`flex-1 ${c}`} />)}
            </div>
            <div className="flex h-[15px] items-center border-t border-[#c6c0ba] bg-[#cdcdcd] pl-[3px]"><div className="h-2 w-[79px] rounded-full bg-[#7e8281]" /></div>
          </div>
          <button aria-label="Palette menu" className="flex w-[37px] shrink-0 items-center justify-center"><LeftTri /></button>
        </div>

        <footer className="flex h-[39px] items-center">
          <div className="grid w-[153px] grid-cols-[48px_auto] gap-x-7 text-right"><span>Fill:</span><span className="text-left">N/A</span><span>Stroke:</span><span className="text-left">N/A</span></div>
          <span className="w-[22px] pl-[5px]">O:</span>
          <Spin label="Opacity" value="100" width="w-[68px]" tall="h-[38px]" disabled />
          <div className="ml-[7px] h-[38px] w-px bg-[#dad8d5]" />
          <button aria-label="Toggle layer visibility" className="ml-[11px]">
            <Svg>
              <path d="M.5 9Q8 1.500 15.500 9 8 15.500.5 9z" fill="#fff" stroke="#111" strokeWidth="1.300" />
              <circle cx="8" cy="8.500" r="3.300" fill="#222" /><circle cx="9" cy="7.300" r="1" fill="#fff" />
              <path d="M2 6L.8 3.500M5 4.200L4.300 1.200M8 3.500V.5M11 4.200l.7-3M14 6l1.200-2.500M2 11l12 1.500" stroke="#111" />
            </Svg>
          </button>
          <button aria-label="Toggle layer lock" className="ml-5"><Lock open /></button>
          <div className="ml-[10px] grid items-center">
            <select aria-label="Layer" className={`col-start-1 row-start-1 h-[38px] w-[87px] appearance-none pl-3 text-[12px] font-bold ${raised}`}><option>•Layer 1</option></select>
            <span className="pointer-events-none col-start-1 row-start-1 mr-[11px] justify-self-end"><Down /></span>
          </div>
          <div className="ml-auto h-[38px] w-px bg-[#dad8d5]" />
          <div className="ml-[10px] grid grid-cols-[26px_auto]"><span>X:</span><span className="text-right text-[15px]">349.84</span><span>Y:</span><span className="text-right text-[15px]">185.73</span></div>
          <span className="w-[34px] pr-[11px] text-right">Z:</span>
          <Spin label="Zoom" value="66%" width="w-[105px]" tall="h-[38px]" cell="w-[21px]" input="pl-[10px]" />
          <span className="w-[34px] pr-[10px] text-right">R:</span>
          <Spin label="Rotation" value="0.00°" width="w-[115px]" tall="h-[38px]" cell="w-[21px]" input="pl-[13px]" plusBg="bg-[#f3f3f5]" />
          <span className="w-[10px]" />
        </footer>
      </div>
    </div>
  );
}
